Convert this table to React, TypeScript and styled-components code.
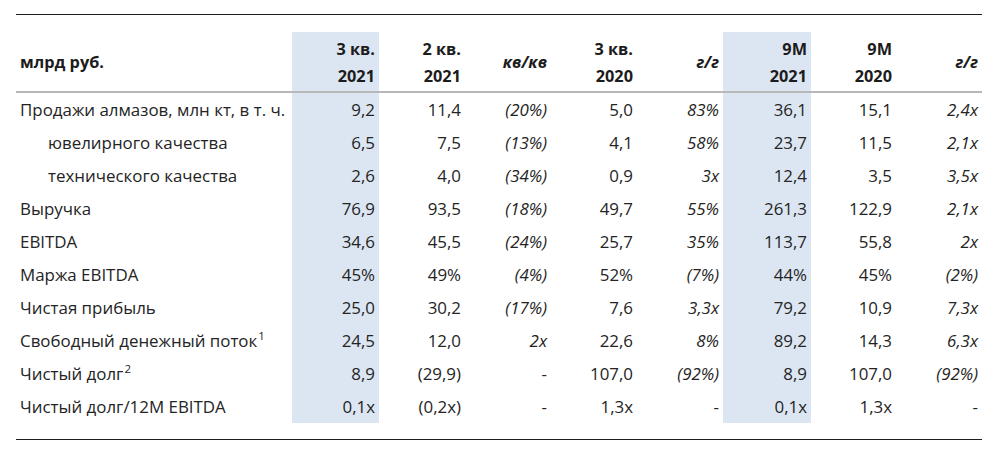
import React from "react";
import styled, { createGlobalStyle } from "styled-components";

const Global = createGlobalStyle`
  html, body { margin: 0; padding: 0; background: #ffffff; }
  body { font-family: "Open Sans", "Noto Sans", "Liberation Sans", sans-serif; }
`;

const COLS = "276px 87px 86px 86px 86px 86px 88px 85px 86px";
const BLUE = "#dce6f2";
const FS = "16.9px";

const Page = styled.div`
  width: 1000px;
  height: 456px;
  padding: 14px 0 0 16px;
  box-sizing: border-box;
  color: #242424;
`;

const Table = styled.div`
  width: 966px;
  border-top: 1px solid #1e1e1e;
  padding-top: 17px;
`;

const HeadRow = styled.div`
  display: grid;
  grid-template-columns: ${COLS};
  height: 59px;
  border-bottom: 2px solid #b8b8b8;
`;

const Row = styled.div`
  display: grid;
  grid-template-columns: ${COLS};
  height: 33px;
`;

const HeadCell = styled.div<{ $blue?: boolean; $italic?: boolean; $left?: boolean }>`
  background: ${(p) => (p.$blue ? BLUE : "transparent")};
  display: flex;
  flex-direction: column;
  justify-content: center;
  align-items: ${(p) => (p.$left ? "flex-start" : "flex-end")};
  padding: ${(p) => (p.$left ? "2px 0 0 4px" : "2px 4px 0 0")};
  font-weight: 700;
  font-style: ${(p) => (p.$italic ? "italic" : "normal")};
  font-size: 16.3px;
  line-height: 27px;
  color: #1c1c1c;
`;

const Cell = styled.div<{ $blue?: boolean; $italic?: boolean }>`
  background: ${(p) => (p.$blue ? BLUE : "transparent")};
  display: flex;
  align-items: center;
  justify-content: flex-end;
  padding-right: 4px;
  font-size: ${FS};
  font-style: ${(p) => (p.$italic ? "italic" : "normal")};
  white-space: nowrap;
`;

const Label = styled.div<{ $indent?: boolean }>`
  display: flex;
  align-items: center;
  padding-left: ${(p) => (p.$indent ? "32px" : "4px")};
  font-size: ${FS};
  white-space: nowrap;
`;

const Sup = styled.span`
  font-size: 11.5px;
  line-height: 1;
  margin-left: 1px;
  align-self: flex-start;
  margin-top: 6px;
`;

const BottomGap = styled.div`
  height: 16px;
  border-bottom: 1px solid #1e1e1e;
`;

type RowData = {
  label: React.ReactNode;
  indent?: boolean;
  values: string[];
};

const ITALIC = [false, false, true, false, true, false, false, true];
const BLUECOL = [true, false, false, false, false, true, false, false];

const rows: RowData[] = [
  { label: "Продажи алмазов, млн кт, в т. ч.", values: ["9,2", "11,4", "(20%)", "5,0", "83%", "36,1", "15,1", "2,4x"] },
  { label: "ювелирного качества", indent: true, values: ["6,5", "7,5", "(13%)", "4,1", "58%", "23,7", "11,5", "2,1x"] },
  { label: "технического качества", indent: true, values: ["2,6", "4,0", "(34%)", "0,9", "3x", "12,4", "3,5", "3,5x"] },
  { label: "Выручка", values: ["76,9", "93,5", "(18%)", "49,7", "55%", "261,3", "122,9", "2,1x"] },
  { label: "EBITDA", values: ["34,6", "45,5", "(24%)", "25,7", "35%", "113,7", "55,8", "2x"] },
  { label: "Маржа EBITDA", values: ["45%", "49%", "(4%)", "52%", "(7%)", "44%", "45%", "(2%)"] },
  { label: "Чистая прибыль", values: ["25,0", "30,2", "(17%)", "7,6", "3,3x", "79,2", "10,9", "7,3x"] },
  {
    label: (
      <>
        Свободный денежный поток<Sup>1</Sup>
      </>
    ),
    values: ["24,5", "12,0", "2x", "22,6", "8%", "89,2", "14,3", "6,3x"],
  },
  {
    label: (
      <>
        Чистый долг<Sup>2</Sup>
      </>
    ),
    values: ["8,9", "(29,9)", "-", "107,0", "(92%)", "8,9", "107,0", "(92%)"],
  },
  { label: "Чистый долг/12M EBITDA", values: ["0,1x", "(0,2x)", "-", "1,3x", "-", "0,1x", "1,3x", "-"] },
];

const headers: { lines: string[]; italic?: boolean }[] = [
  { lines: ["3 кв.", "2021"] },
  { lines: ["2 кв.", "2021"] },
  { lines: ["кв/кв"], italic: true },
  { lines: ["3 кв.", "2020"] },
  { lines: ["г/г"], italic: true },
  { lines: ["9M", "2021"] },
  { lines: ["9M", "2020"] },
  { lines: ["г/г"], italic: true },
];

export default function App() {
  return (
    <Page>
      <Global />
      <Table>
        <HeadRow>
          <HeadCell $left>млрд руб.</HeadCell>
          {headers.map((h, i) => (
            <HeadCell key={i} $blue={BLUECOL[i]} $italic={h.italic}>
              {h.lines.map((l, j) => (
                <span key={j}>{l}</span>
              ))}
            </HeadCell>
          ))}
        </HeadRow>
        {rows.map((r, ri) => (
          <Row key={ri}>
            <Label $indent={r.indent}>{r.label}</Label>
            {r.values.map((v, i) => (
              <Cell key={i} $blue={BLUECOL[i]} $italic={ITALIC[i] && v !== "-"}>
                {v}
              </Cell>
            ))}
          </Row>
        ))}
        <BottomGap />
      </Table>
    </Page>
  );
}
